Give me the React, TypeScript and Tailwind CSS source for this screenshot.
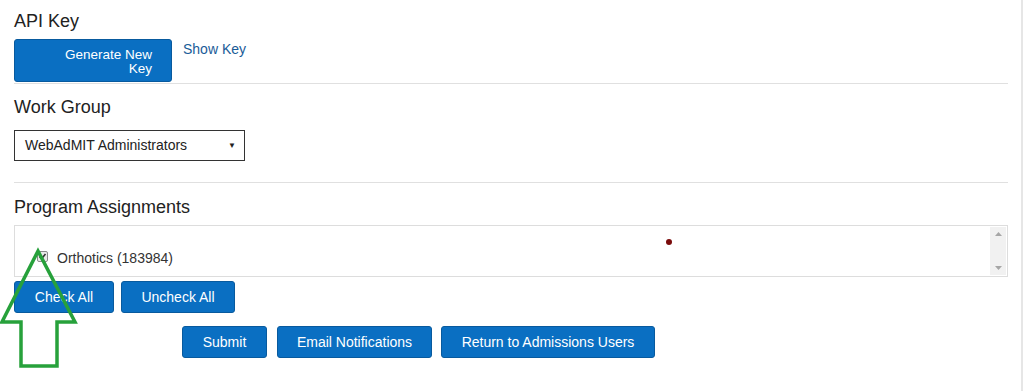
import React from "react";

const btn =
  "bg-[#0a6fc2] text-white rounded-[3px] border border-[#085a9e] text-[14px] leading-none flex items-center justify-center";

export default function App() {
  return (
    <div
      className="relative w-[1024px] h-[391px] bg-white flex overflow-hidden"
      style={{ fontFamily: '"Liberation Sans", Arial, sans-serif' }}
    >
      <div className="w-[1021px] pl-[14px] pr-[13px] pt-[9px]">
        {/* API Key */}
        <h2 className="text-[18px] leading-[24px] text-[#222]">API Key</h2>
        <div className="mt-[6px] flex items-start border-b border-[#e0e0e0] h-[45px]">
          <button className="w-[158px] h-[43px] bg-[#0a6fc2] text-white rounded-[3px] border border-[#085a9e] text-[13.5px] leading-[14px] text-right pr-[19px] pt-[2px]">
            Generate New
            <br />
            Key
          </button>
          <a className="ml-[11px] mt-[2px] text-[14px] leading-[16px] text-[#1a5c98]">Show Key</a>
        </div>

        {/* Work Group */}
        <h2 className="mt-[11px] text-[18px] leading-[24px] text-[#222]">Work Group</h2>
        <div className="mt-[11px] w-[231px] h-[31px] border border-[#333] flex items-center justify-between pl-[10px] pr-[8px] text-[14px] text-[#222]">
          <span>WebAdMIT Administrators</span>
          <span className="text-[8px] leading-none">▼</span>
        </div>
        <div className="mt-[21px] border-b border-[#e0e0e0]" />

        {/* Program Assignments */}
        <h2 className="mt-[12px] text-[18px] leading-[24px] text-[#222]">Program Assignments</h2>
        <div className="mt-[6px] h-[52px] border border-[#ddd] flex">
          <div className="flex-1 flex items-end pb-[10px] pl-[22px]">
            <span className="w-[11px] h-[11px] border border-[#8a8a8a] bg-[#e9e9e9] rounded-[2px] flex items-center justify-center mb-[4px]">
              <svg width="9" height="9" viewBox="0 0 9 9">
                <path d="M1.5 4.8 L3.5 6.8 L7.5 2" stroke="#333" strokeWidth="1.6" fill="none" />
              </svg>
            </span>
            <span className="ml-[9px] text-[14px] leading-[16px] text-[#333]">Orthotics (183984)</span>
          </div>
          <div className="w-[16px] my-[1px] mr-[1px] bg-[#f1f1f1] flex flex-col justify-between items-center py-[5px]">
            <svg width="7" height="4" viewBox="0 0 7 4">
              <path d="M0 4 L3.5 0 L7 4 Z" fill="#a6a6a6" />
            </svg>
            <svg width="7" height="4" viewBox="0 0 7 4">
              <path d="M0 0 L3.5 4 L7 0 Z" fill="#a6a6a6" />
            </svg>
          </div>
        </div>

        <div className="mt-[4px] flex gap-[7px]">
          <button className={`${btn} w-[100px] h-[32px]`}>Check All</button>
          <button className={`${btn} w-[114px] h-[32px]`}>Uncheck All</button>
        </div>

        <div className="mt-[13px] ml-[168px] flex">
          <button className={`${btn} w-[85px] h-[32px]`}>Submit</button>
          <button className={`${btn} ml-[10px] w-[155px] h-[32px]`}>Email Notifications</button>
          <button className={`${btn} ml-[9px] w-[214px] h-[32px]`}>Return to Admissions Users</button>
        </div>
      </div>
      <div className="w-[2px] h-full bg-[#e6e6e6]" />

      {/* red dot */}
      <span className="absolute left-[666px] top-[239px] w-[6px] h-[6px] rounded-full bg-[#7a0c0c]" />

      {/* green arrow annotation */}
      <svg className="absolute left-0 top-0 pointer-events-none" width="1024" height="391">
        <polygon
          points="38,251 75,322 57,322 57,366 21,366 21,322 2,322"
          fill="none"
          stroke="#27a13b"
          strokeWidth="3.5"
          strokeLinejoin="miter"
        />
      </svg>
    </div>
  );
}
